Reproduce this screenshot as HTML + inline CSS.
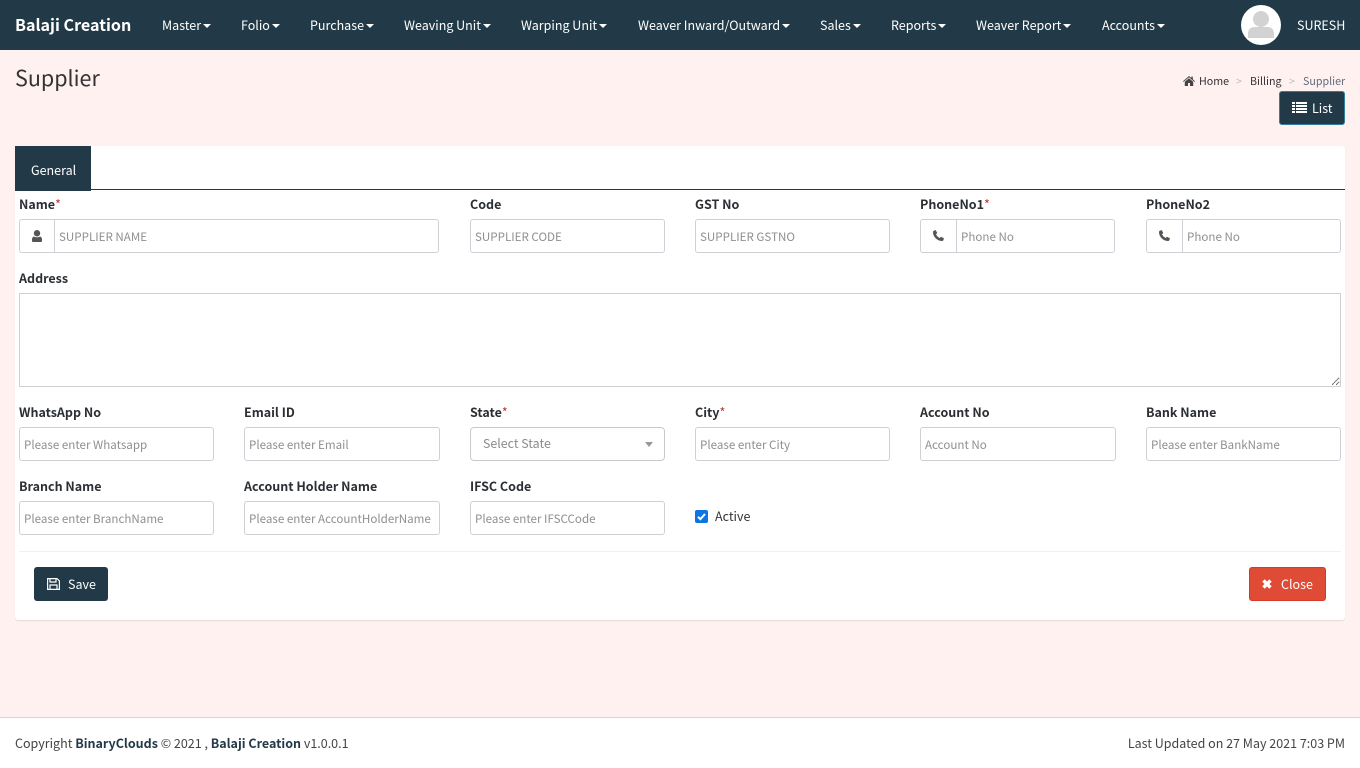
<!DOCTYPE html>
<html lang="en">
<head>
<meta charset="utf-8">
<title>Supplier</title>
<style>
*{box-sizing:border-box}
html,body{margin:0;padding:0;width:1360px;height:768px;overflow:hidden}
body{background:#fff1f0;font-family:"Noto Sans CJK JP","Liberation Sans",sans-serif;color:#333;position:relative;font-size:12.5px}
.a{position:absolute;white-space:nowrap}
#nav{left:0;top:0;width:1360px;height:50px;background:#223a47}
.n{top:15px;line-height:20px;font-size:12.5px;color:#fff}
.n:after{content:"";display:inline-block;margin-left:2px;vertical-align:2px;border-top:4px solid #fff;border-left:4px solid transparent;border-right:4px solid transparent}
.l{font-size:12.5px;font-weight:700;line-height:18px;color:#2b2f33}
.l i{font-style:normal;font-weight:400;color:#c0392b}
input,textarea{position:absolute;display:block;margin:0;background:#fff;border:1px solid #ced0d6;border-radius:3px;font-family:inherit;font-size:11.6px;color:#333;padding:1px 4px 0;outline:0}
input::placeholder{color:#8f8f8f;opacity:1}
.g{position:absolute;background:#fff;border:1px solid #ced0d6;border-right:0;border-radius:3px 0 0 3px}
.ig{border-radius:0 3px 3px 0!important}
svg{position:absolute;display:block}
</style>
</head>
<body>
<div class="a" id="nav"></div>
<div class="a" style="left:15px;top:12px;font-size:16.100px;font-weight:700;line-height:24px;color:#fff">Balaji Creation</div>
<div class="a n" style="left:162px">Master</div>
<div class="a n" style="left:241px">Folio</div>
<div class="a n" style="left:310px">Purchase</div>
<div class="a n" style="left:404px">Weaving Unit</div>
<div class="a n" style="left:521px">Warping Unit</div>
<div class="a n" style="left:638px">Weaver Inward/Outward</div>
<div class="a n" style="left:820px">Sales</div>
<div class="a n" style="left:891px">Reports</div>
<div class="a n" style="left:976px">Weaver Report</div>
<div class="a n" style="left:1102px">Accounts</div>
<svg style="left:1241px;top:5px" width="40" height="40" viewBox="0 0 40 40"><defs><clipPath id="c"><circle cx="20" cy="20" r="20"/></clipPath></defs><circle cx="20" cy="20" r="20" fill="#fff"/><g clip-path="url(#c)" fill="#d2d2d2"><circle cx="20" cy="14" r="8"/><path d="M7 33V29C7 24 10 22 14 22H26C30 22 33 24 33 29V33Z"/></g></svg>
<div class="a" style="left:1297px;top:15px;font-size:12.5px;line-height:20px;color:#fff">SURESH</div>

<div class="a" style="left:15px;top:63px;font-size:21.500px;line-height:30px;color:#333">Supplier</div>
<svg style="left:1183px;top:76px" width="12" height="10" viewBox="0 0 12 10"><path fill="#444" d="M6 0L0 5.2l.6.7L6 1.3l5.4 4.6.6-.7L9.8 3.3V.6H8.300V2L6 0zM1.800 5.800V10H5V7h2v3h3.200V5.800L6 2.300z"/></svg>
<div class="a" style="left:1199px;top:73px;font-size:10.700px;line-height:18px;color:#333">Home</div>
<div class="a" style="left:1236px;top:73px;font-size:10.700px;line-height:18px;color:#bbb">&gt;</div>
<div class="a" style="left:1250px;top:73px;font-size:10.700px;line-height:18px;color:#333">Billing</div>
<div class="a" style="left:1289px;top:73px;font-size:10.700px;line-height:18px;color:#bbb">&gt;</div>
<div class="a" style="left:1303px;top:73px;font-size:10.700px;line-height:18px;color:#636b7a">Supplier</div>
<div class="a" style="left:1279px;top:91px;width:66px;height:34px;background:#223a47;border:1px solid #2f7f9e;border-radius:3px"></div>
<svg style="left:1292px;top:102px" width="15" height="11" viewBox="0 0 15 11"><path fill="#fff" d="M0 0h3v2H0zM4 0h11v2H4zM0 3h3v2H0zM4 3h11v2H4zM0 6h3v2H0zM4 6h11v2H4zM0 9h3v2H0zM4 9h11v2H4z"/></svg>
<div class="a" style="left:1312px;top:99px;font-size:12.5px;line-height:18px;color:#fff">List</div>

<div class="a" style="left:15px;top:146px;width:1330px;height:474px;background:#fff;border-radius:3px;box-shadow:0 1px 1px rgba(0,0,0,.1)"></div>
<div class="a" style="left:15px;top:146px;width:76px;height:45px;background:#223a47"></div>
<div class="a" style="left:91px;top:189px;width:1254px;height:1px;background:#223a47"></div>
<div class="a" style="left:31px;top:161px;font-size:12.5px;line-height:18px;color:#fff">General</div>

<div class="a l" style="left:19px;top:195px">Name<i>*</i></div>
<div class="a l" style="left:470px;top:195px">Code</div>
<div class="a l" style="left:695px;top:195px">GST No</div>
<div class="a l" style="left:920px;top:195px">PhoneNo1<i>*</i></div>
<div class="a l" style="left:1146px;top:195px">PhoneNo2</div>

<div class="g" style="left:19px;top:219px;width:36px;height:34px"></div>
<svg style="left:32px;top:230px" width="10" height="12" viewBox="0 0 10 12"><path fill="#555" d="M5 0a3 3 0 0 1 0 6.400A3 3 0 0 1 5 0zM2 6.500c.8.500 1.800.8 3 .8s2.200-.3 3-.8c1.300.3 2 1.300 2 2.900V11c0 .6-.4 1-1 1H1c-.6 0-1-.4-1-1V9.400c0-1.600.7-2.600 2-2.900z"/></svg>
<input class="ig" style="left:54px;top:219px;width:385px;height:34px" placeholder="SUPPLIER NAME">
<input style="left:470px;top:219px;width:195px;height:34px" placeholder="SUPPLIER CODE">
<input style="left:695px;top:219px;width:195px;height:34px" placeholder="SUPPLIER GSTNO">
<div class="g" style="left:920px;top:219px;width:37px;height:34px"></div>
<svg style="left:933px;top:230px" width="11" height="11" viewBox="0 0 11 11"><path fill="#555" d="M2.600 0L.8.700C.2 1 0 1.600 0 2.300 0 6.800 4.200 11 8.700 11c.7 0 1.300-.2 1.600-.8l.7-1.800-3-1.700-1.300 1.300C5.100 7.300 3.700 5.900 3 4.300l1.300-1.300z"/></svg>
<input class="ig" style="left:956px;top:219px;width:159px;height:34px" placeholder="Phone No">
<div class="g" style="left:1146px;top:219px;width:37px;height:34px"></div>
<svg style="left:1159px;top:230px" width="11" height="11" viewBox="0 0 11 11"><path fill="#555" d="M2.600 0L.8.700C.2 1 0 1.600 0 2.300 0 6.800 4.200 11 8.700 11c.7 0 1.300-.2 1.600-.8l.7-1.800-3-1.700-1.300 1.300C5.100 7.300 3.700 5.900 3 4.300l1.300-1.300z"/></svg>
<input class="ig" style="left:1182px;top:219px;width:159px;height:34px" placeholder="Phone No">

<div class="a l" style="left:19px;top:269px">Address</div>
<textarea style="left:19px;top:293px;width:1322px;height:94px;border-radius:0"></textarea>

<div class="a l" style="left:19px;top:403px">WhatsApp No</div>
<div class="a l" style="left:244px;top:403px">Email ID</div>
<div class="a l" style="left:470px;top:403px">State<i>*</i></div>
<div class="a l" style="left:695px;top:403px">City<i>*</i></div>
<div class="a l" style="left:920px;top:403px">Account No</div>
<div class="a l" style="left:1146px;top:403px">Bank Name</div>

<input style="left:19px;top:427px;width:195px;height:34px" placeholder="Please enter Whatsapp">
<input style="left:244px;top:427px;width:196px;height:34px" placeholder="Please enter Email">
<div class="a" style="left:470px;top:427px;width:195px;height:34px;border:1px solid #c9c9c9;border-radius:4px;background:#fff"></div>
<div class="a" style="left:483px;top:434px;font-size:12.4px;line-height:18px;color:#8a8a8a">Select State</div>
<div class="a" style="left:645px;top:442px;border-top:5px solid #999;border-left:4px solid transparent;border-right:4px solid transparent"></div>
<input style="left:695px;top:427px;width:195px;height:34px" placeholder="Please enter City">
<input style="left:920px;top:427px;width:196px;height:34px" placeholder="Account No">
<input style="left:1146px;top:427px;width:195px;height:34px" placeholder="Please enter BankName">

<div class="a l" style="left:19px;top:477px">Branch Name</div>
<div class="a l" style="left:244px;top:477px">Account Holder Name</div>
<div class="a l" style="left:470px;top:477px">IFSC Code</div>

<input style="left:19px;top:501px;width:195px;height:34px" placeholder="Please enter BranchName">
<input style="left:244px;top:501px;width:196px;height:34px" placeholder="Please enter AccountHolderName">
<input style="left:470px;top:501px;width:195px;height:34px" placeholder="Please enter IFSCCode">
<div class="a" style="left:695px;top:510px;width:13px;height:13px;background:#0b75e6;border-radius:2px"></div>
<svg style="left:695px;top:510px" width="13" height="13" viewBox="0 0 13 13"><path d="M3 6.800L5.400 9.200 10 4" fill="none" stroke="#fff" stroke-width="2"/></svg>
<div class="a" style="left:715px;top:507px;font-size:12.5px;line-height:18px;color:#333">Active</div>

<div class="a" style="left:19px;top:551px;width:1322px;height:1px;background:#f1f1f1"></div>
<div class="a" style="left:34px;top:567px;width:74px;height:34px;background:#223a47;border-radius:3px"></div>
<svg style="left:47px;top:578px" width="13" height="12" viewBox="0 0 13 12"><path fill="none" stroke="#fff" stroke-width="1.200" d="M.6.600H10L12.400 3V11.400H.6zM3 .8V4H9V.8M3 11.300V7H10V11.300"/></svg>
<div class="a" style="left:68px;top:575px;font-size:12.5px;line-height:18px;color:#fff">Save</div>
<div class="a" style="left:1249px;top:567px;width:77px;height:34px;background:#e04b36;border:1px solid #d73925;border-radius:3px"></div>
<svg style="left:1262px;top:579px" width="10" height="10" viewBox="0 0 10 10"><path d="M1.500 1.500L8.500 8.500M8.500 1.500L1.500 8.500" stroke="#fff" stroke-width="3.400"/></svg>
<div class="a" style="left:1281px;top:575px;font-size:12.5px;line-height:18px;color:#fff">Close</div>

<div class="a" style="left:0;top:717px;width:1360px;height:51px;background:#fff;border-top:1px solid #d2d6de"></div>
<div class="a" style="left:15px;top:734px;font-size:12.5px;line-height:18px;color:#444">Copyright <b style="color:#223a47">BinaryClouds</b> © 2021 , <b style="color:#223a47">Balaji Creation</b> v1.0.0.1</div>
<div class="a" style="right:15px;top:734px;font-size:12.5px;line-height:18px;color:#444">Last Updated on 27 May 2021 7:03 PM</div>
</body>
</html>
